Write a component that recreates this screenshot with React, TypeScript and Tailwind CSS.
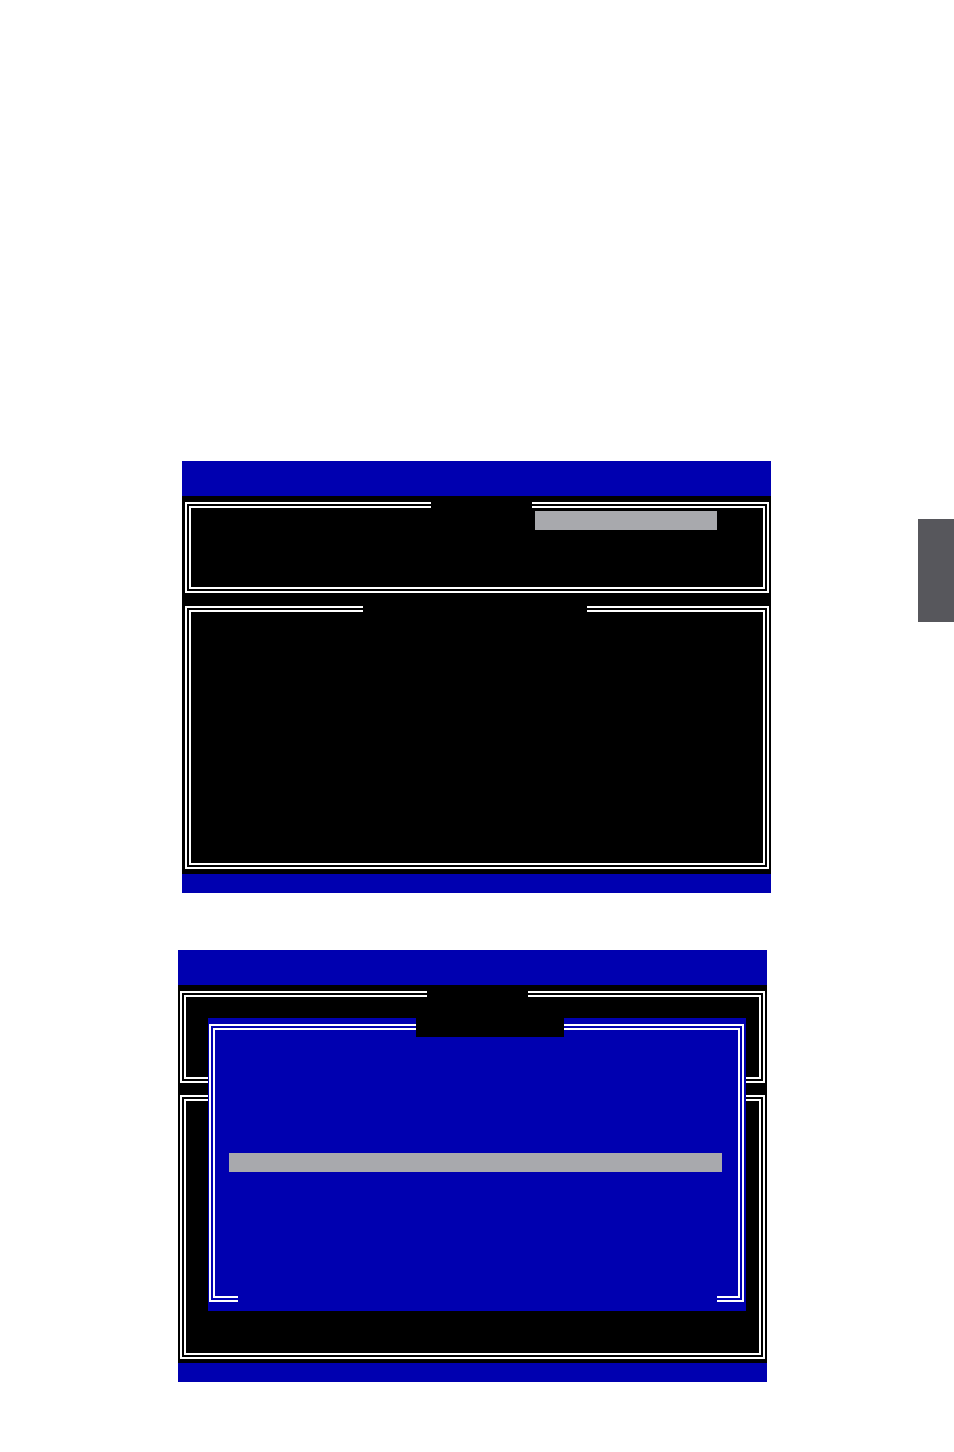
import type { ReactNode } from "react";

// Double white line box used by the setup screens
function DoubleFrame({
  className = "",
  innerClassName = "",
  children,
}: {
  className?: string;
  innerClassName?: string;
  children?: ReactNode;
}) {
  return (
    <div className={`relative border-2 border-white px-[2px] py-[2px] ${className}`}>
      <div className={`h-full border-2 border-white ${innerClassName}`}>{children}</div>
    </div>
  );
}

function SetupScreen({ children, className = "" }: { children: ReactNode; className?: string }) {
  return (
    <div className={`relative w-[589px] ${className}`}>
      <div className="h-[35px] bg-[#0000b0]" />
      <div className="h-[378px] bg-black">{children}</div>
      <div className="h-[19px] bg-[#0000b0]" />
    </div>
  );
}

export default function App() {
  return (
    <div className="relative w-[954px] h-[1452px] bg-white overflow-hidden">
      {/* chapter thumb tab */}
      <div className="absolute left-[918px] top-[519px] w-[36px] h-[103px] bg-[#57575c]" />

      <div className="flex flex-col">
        <SetupScreen className="mt-[461px] ml-[182px]">
          <div className="flex flex-col pt-[6px] pl-[3px] pr-[2px]">
            <DoubleFrame className="h-[91px]" innerClassName="pt-[3px] pl-[344px]">
              <div className="absolute left-[244px] -top-[7px] w-[101px] h-[14px] bg-black" />
              <div className="w-[182px] h-[19px] bg-[#a8a9ad]" />
            </DoubleFrame>
            <DoubleFrame className="mt-[13px] h-[263px]">
              <div className="absolute left-[176px] -top-[2px] w-[224px] h-[8px] bg-black" />
            </DoubleFrame>
          </div>
        </SetupScreen>

        <SetupScreen className="mt-[57px] ml-[178px]">
          <div className="flex flex-col pt-[6px] px-[2px]">
            <DoubleFrame className="h-[92px]">
              <div className="absolute left-[245px] -top-[8px] w-[101px] h-[14px] bg-black" />
            </DoubleFrame>
            <DoubleFrame className="mt-[12px] h-[264px]" />
          </div>

          {/* popup dialog */}
          <div className="absolute left-[30px] top-[68px] w-[538px] h-[293px] bg-[#0000b0] pl-[1px] pr-[2px] pt-[6px] pb-[9px]">
            <DoubleFrame className="h-full" innerClassName="pt-[123px] pl-[14px]">
              <div className="w-[493px] h-[19px] bg-[#a8a9ad]" />
              <div className="absolute left-[27px] -bottom-[2px] w-[479px] h-[8px] bg-[#0000b0]" />
            </DoubleFrame>
            <div className="absolute left-[208px] top-0 w-[148px] h-[19px] bg-black" />
          </div>
        </SetupScreen>
      </div>
    </div>
  );
}
